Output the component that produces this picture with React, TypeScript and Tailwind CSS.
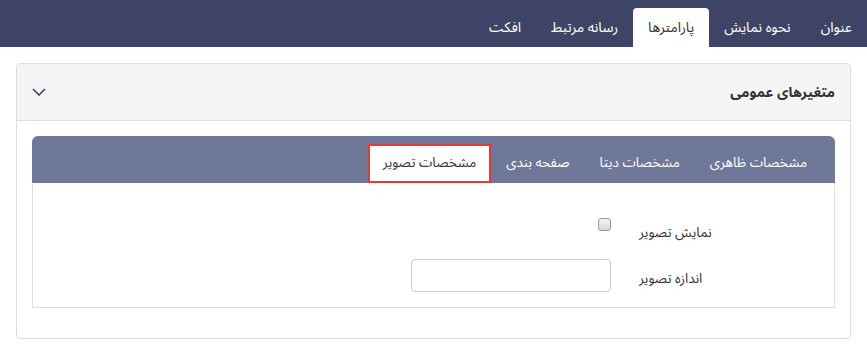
const font = { fontFamily: '"Noto Sans Arabic", "DejaVu Sans", sans-serif' };

const topTabs = ["عنوان", "نحوه نمایش", "پارامترها", "رسانه مرتبط", "افکت"];
const innerTabs = ["مشخصات ظاهری", "مشخصات دیتا", "صفحه بندی", "مشخصات تصویر"];

const App = () => {
  return (
    <div dir="rtl" className="w-[867px] h-[350px] bg-white text-[13.5px] text-[#333]" style={font}>
      {/* top tabs */}
      <div className="h-[47px] bg-[#3d4465] flex items-end">
        <ul className="flex text-[14px]">
          {topTabs.map((t) => (
            <li
              key={t}
              className={
                t === "پارامترها"
                  ? "h-[39px] px-[15px] flex items-center bg-white text-[#333] rounded-t-[4px]"
                  : "h-[39px] px-[15px] flex items-center text-white"
              }
            >
              {t}
            </li>
          ))}
        </ul>
      </div>

      {/* card */}
      <div className="mx-[16px] mt-[16px] border border-[#dddddd] rounded-[4px]">
        <div className="h-[57px] bg-[#f5f5f5] border-b border-[#dddddd] rounded-t-[4px] flex items-center justify-between px-[15px]">
          <span className="text-[14px] font-bold text-[#333]">متغیرهای عمومی</span>
          <svg width="14" height="8" viewBox="0 0 14 8" fill="none">
            <polyline points="1,1 7,7 13,1" stroke="#3d4465" strokeWidth="1.6" />
          </svg>
        </div>

        <div className="pt-[15px] pb-[30px] px-[15px]">
          <div className="h-[47px] bg-[#6f7899] rounded-t-[6px] flex items-end pr-[13px]">
            {innerTabs.map((t) => (
              <div
                key={t}
                className={
                  t === "مشخصات تصویر"
                    ? "h-[39px] px-[13px] flex items-center bg-white text-[#333] border-2 border-[#e53935]"
                    : "h-[39px] px-[15px] flex items-center text-white"
                }
              >
                {t}
              </div>
            ))}
          </div>

          <div className="h-[125px] border border-t-0 border-[#dddddd] pr-[15px] pt-[35px]">
            <div className="flex h-[30px]">
              <div className="w-[180px] text-left leading-[30px]">نمایش تصویر</div>
              <div className="mr-[28px]">
                <span className="block w-[13px] h-[13px] border border-[#9a9a9a] rounded-[3px] bg-gradient-to-b from-[#f4f4f4] to-[#d8d8d8]" />
              </div>
            </div>
            <div className="flex mt-[11px]">
              <div className="w-[180px] text-left leading-[33px] pt-[3px]">اندازه تصویر</div>
              <div className="mr-[28px]">
                <input className="w-[200px] h-[33px] border border-[#cccccc] rounded-[4px] bg-white outline-none" />
              </div>
            </div>
          </div>
        </div>
      </div>
    </div>
  );
};

export default App;
